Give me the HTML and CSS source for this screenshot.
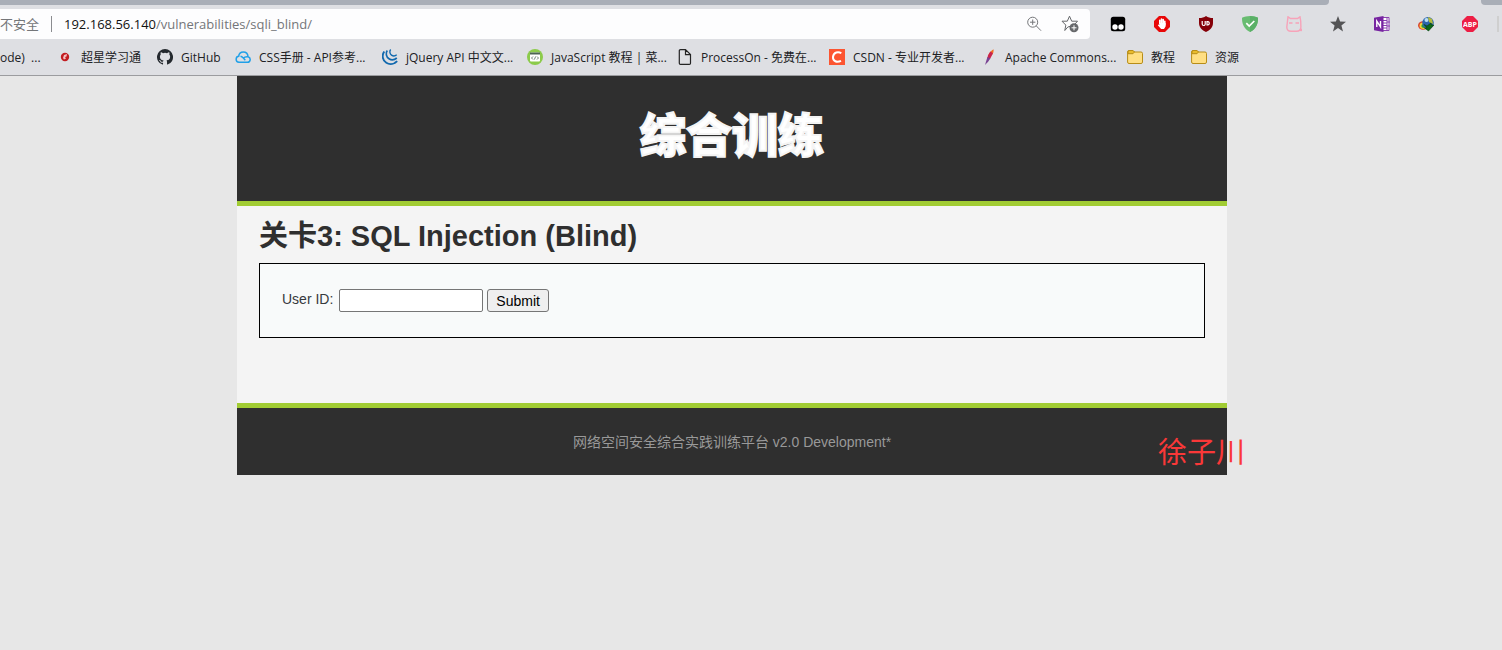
FILE: index.html
```html
<!DOCTYPE html>
<html lang="zh-CN">
<head>
<meta charset="utf-8">
<title>SQL Injection (Blind)</title>
<link rel="stylesheet" href="styles.css">
</head>
<body>
<header class="browser">
  <div class="tabs"><div class="tab-strip"></div><div class="tab-end"></div></div>
  <div class="toolbar">
    <div class="address">
      <span class="insecure">不安全</span>
      <span class="url"><b class="host">192.168.56.140</b>/vulnerabilities/sqli_blind/</span>
      <button class="icon-button" aria-label="缩放"><svg class="icon" viewBox="0 0 16 16" fill="none" stroke="#747679"><circle cx="6.7" cy="6.2" r="5"/><path d="M10.2 9.8 15 14.7M4 6.2h5.4M6.7 3.5v5.4"/></svg></button>
      <button class="icon-button" aria-label="收藏"><svg class="icon icon-large" viewBox="0 0 18 18" fill="none" stroke="#66686b"><path d="m8.5 1.2 2.2 5h5.8l-3.500 4-6.200 1.800-3 3.500 1-5.400L1 6.200h5.300z" stroke-linejoin="round"/><circle cx="13" cy="12.8" r="4.5" fill="#66686b" stroke="none"/><path stroke="#fff" d="M10.5 12.8h5M13 10.3v5"/></svg></button>
    </div>
    <nav class="extensions" aria-label="扩展">
      <button class="icon-button" aria-label="Tampermonkey"><svg class="icon" viewBox="0 0 16 16"><rect x=".8" y=".8" width="14.4" height="14.4" rx="2.5"/><circle cx="5" cy="11" r="2.7" fill="#fff"/><circle cx="11" cy="11" r="2.7" fill="#fff"/></svg></button>
      <button class="icon-button" aria-label="AdBlock"><svg class="icon" viewBox="0 0 16 16"><path fill="#e80808" d="M5 0h6l5 5v6l-5 5H5l-5-5V5z"/><path fill="none" stroke="#fff" stroke-width="1.6" stroke-linecap="round" d="M5.8 8V4.2M7.5 8V3M9.2 8V3.6M10.8 9V5.2"/><path fill="#fff" d="M5 7h6.6v3.5L10 13H7.1L3.8 9.2l.7-.8L6 9z"/></svg></button>
      <button class="icon-button" aria-label="uBlock Origin"><svg class="icon" viewBox="0 0 16 16"><path fill="#850008" d="M8 0c2 1.4 4.2 2 7 2v5c0 4.500-3 7-7 9-4-2-7-4.500-7-9V2c3 0 5-.6 7-2z"/><path fill="none" stroke="#fff" stroke-width="1.2" d="M4.200 5v3a1.500 1.500 0 0 0 3 0V5M9 5.600v3.300h1a1.700 1.700 0 0 0 0-3.300z"/></svg></button>
      <button class="icon-button" aria-label="AdGuard"><svg class="icon" viewBox="0 0 16 16"><path fill="#68bc71" d="M8 0c3 .1 5.500.7 8 1.700 0 6-1.500 10.800-8 14.300C1.500 12.500 0 7.700 0 1.700 2.500.7 5 .1 8 0z"/><path fill="#5ab067" d="M8 0c3 .1 5.500.7 8 1.700 0 6-1.500 10.800-8 14.300z"/><path fill="none" stroke="#fff" stroke-width="1.700" d="m4.300 7.200 2.900 2.900L12.300 5"/></svg></button>
      <button class="icon-button" aria-label="小猫"><svg class="icon" viewBox="0 0 16 16" fill="none" stroke="#f7a3b9" stroke-width="1.400"><path d="M1.500 5 2 .8 4.500 2.500h7L14 .8l.7 4.200.2 6c0 3-1.800 4.300-4.400 4.300H5C2.300 15.300.8 14 .8 11zM3 7h3.500M9.500 7H13"/><circle cx="14.800" cy="13.800" r=".7"/></svg></button>
      <button class="icon-button" aria-label="收藏夹"><svg class="icon" viewBox="0 0 16 16"><path fill="#545456" d="m8 0 2.100 5.500 5.900.3-4.600 3.700L13 15.400l-5-3.300-5 3.300 1.600-5.900L0 5.800l5.900-.3z"/></svg></button>
      <button class="icon-button" aria-label="OneNote"><svg class="icon" viewBox="0 0 16 16"><path fill="#fff" stroke="#8b42b1" d="M8 1.500h7v13H8z"/><path stroke="#8b42b1" d="M8 4.500h5M8 7h5M8 9.500h5M8 12h5M13 2v12M13 6h3M13 10h3"/><path fill="#7725a1" d="M0 1.800 9.500 0v16L0 14.200z"/><path fill="none" stroke="#fff" stroke-width="1.400" d="M2.800 11V5.200l3.700 5.600V5"/></svg></button>
      <button class="icon-button" aria-label="IDM"><svg class="icon" viewBox="0 0 16 16"><ellipse cx="5" cy="9.500" rx="5" ry="4.200" fill="#d9432f"/><ellipse cx="5.500" cy="9.800" rx="4" ry="3.200" fill="#f2d438"/><ellipse cx="6" cy="10" rx="2.700" ry="2" fill="#2e9c43"/><circle cx="10" cy="6.800" r="5.800" fill="#2c65ac"/><circle cx="8.500" cy="4" r="2" fill="#b8dcf5"/><path fill="#b5bc3a" d="m10 1 4 2 1 5-4-2z"/><path fill="#0b6817" stroke="#073d0e" stroke-width=".6" d="M6 8.500 9 10l4-3 .5 2H16l-5.500 6-4-3H9z"/></svg></button>
      <button class="icon-button" aria-label="Adblock Plus"><svg class="icon" viewBox="0 0 16 16"><path fill="#ed1e45" d="M5 0h6l5 5v6l-5 5H5l-5-5V5z"/><text class="abp" x="8" y="10.500" text-anchor="middle">ABP</text></svg></button>
      <span class="divider"></span>
    </nav>
  </div>
  <nav class="bookmarks" aria-label="书签">
    <a class="bookmark" href="#">ode)&nbsp; ...</a>
    <a class="bookmark" href="#"><svg class="icon" viewBox="0 0 16 16"><circle cx="8" cy="8" r="4.200" fill="#c21c20"/><path fill="#f4bfc0" d="m6 9 1-3 3-1-.5 2.500L8 8l1 1.500-2 1z"/></svg>超星学习通</a>
    <a class="bookmark" href="#"><svg class="icon" viewBox="0 0 16 16"><path fill="#24292e" d="M8 0a8 8 0 0 0-2.530 15.590c.4.070.55-.170.55-.380v-1.490c-2.010.37-2.530-.490-2.690-.940-.090-.230-.480-.940-.820-1.130-.280-.150-.680-.520-.010-.530.630-.010 1.080.58 1.230.82.72 1.210 1.870.87 2.330.66.070-.520.28-.870.51-1.070-1.780-.200-3.640-.890-3.640-3.950 0-.870.31-1.590.82-2.150-.080-.200-.360-1.020.080-2.120 0 0 .67-.210 2.200.82a7.600 7.600 0 0 1 4 0c1.530-1.040 2.200-.820 2.200-.820.44 1.100.16 1.920.080 2.120.51.56.82 1.270.82 2.150 0 3.070-1.870 3.750-3.650 3.950.29.25.54.73.54 1.480v2.200c0 .21.15.46.55.380A8 8 0 0 0 8 0z"/></svg>GitHub</a>
    <a class="bookmark" href="#"><svg class="icon" viewBox="0 0 16 16" fill="none" stroke="#20a0e8" stroke-width="1.500"><path d="M4 13.300h8.500a2.800 2.800 0 0 0 .6-5.500C12.800 5 10.900 3 8.300 3 5.900 3 4 4.600 3.700 7.200.4 7.500.1 13 4 13.300zM5.500 7.300c1.300.2 2 .9 2.800 1.700l2 2.200M8.300 9.500c.9-1.300 2.200-1.900 4.400-1.700"/></svg>CSS手册 - API参考...</a>
    <a class="bookmark" href="#"><svg class="icon" viewBox="0 0 16 16" fill="none" stroke="#1169ae"><path stroke-width="1.900" d="M2.300 2.500C-.5 6 .5 11.500 4.300 13.800c3.700 2.200 8.200 1.100 10.900-1.600"/><path stroke-width="1.700" d="M5.300 1.500C3.300 4 4.200 8 7 9.800c2.500 1.600 5.700 1 7.800-.8"/><path stroke-width="1.400" d="M8.700.6c-1.500 1.600-.9 4.300.8 5.500 1.600 1.100 3.900.8 5.200-.4"/></svg>jQuery API 中文文...</a>
    <a class="bookmark" href="#"><svg class="icon" viewBox="0 0 16 16"><circle cx="8" cy="8" r="8" fill="#8ccb4b"/><rect x="3" y="3.500" width="10" height="9" rx="1" fill="#fff"/><path d="M3 4.500h10" stroke="#4d6455" stroke-width="2"/><path fill="none" stroke="#4d6455" stroke-width=".8" d="M6 7.500 4.500 9 6 10.500m4-3L11.500 9 10 10.500M8.600 7.500l-1.200 3"/></svg>JavaScript 教程 | 菜...</a>
    <a class="bookmark" href="#"><svg class="icon" viewBox="0 0 16 16" fill="none" stroke="#242424" stroke-width="1.200"><path d="M3.500.6h5l5 5v8.600q0 1.200-1.200 1.200H3.500q-1.200 0-1.200-1.200V1.800Q2.300.6 3.500.6zM8.500.6v5h5"/></svg>ProcessOn - 免费在...</a>
    <a class="bookmark" href="#"><svg class="icon" viewBox="0 0 16 16"><path fill="#fc5531" d="M0 0h16v16H0z"/><path fill="none" stroke="#fff" stroke-width="2" d="M12.300 4.300C9.500 2.300 4.500 3 4 7.900c-.4 4.500 4 5.800 8 3.900"/></svg>CSDN - 专业开发者...</a>
    <a class="bookmark" href="#"><svg class="icon" viewBox="0 0 16 16"><path fill="#f06f23" d="M12.500.3c.4 2.200-.3 4.200-1.700 6L7 7C8 4 10 1.500 12.500.3z"/><path fill="#c9234c" d="M9.500 2.500 12 4.200 9 10l-3 1c.3-3.300 1.600-6.500 3.500-8.500z"/><path fill="#794293" d="m6.500 8 2.800 1.500-2.200 3.200L4 16l1.500-5z"/></svg>Apache Commons...</a>
    <a class="bookmark" href="#"><svg class="icon" viewBox="0 0 16 16"><path fill="#ffdf83" stroke="#b78d18" d="M.6 3Q.6 1.500 2 1.500h4L7.500 3H14q1.500 0 1.500 1.500v8.600q0 1.400-1.500 1.400H2Q.6 14.500.6 13z"/><path fill="#e9bb2c" stroke="#b78d18" d="M1 4.700V3Q1 1.500 2 1.500h4L7.500 3 6 4.700z"/></svg>教程</a>
    <a class="bookmark" href="#"><svg class="icon" viewBox="0 0 16 16"><path fill="#ffdf83" stroke="#b78d18" d="M.6 3Q.6 1.500 2 1.500h4L7.500 3H14q1.500 0 1.500 1.500v8.600q0 1.400-1.500 1.400H2Q.6 14.500.6 13z"/><path fill="#e9bb2c" stroke="#b78d18" d="M1 4.700V3Q1 1.500 2 1.500h4L7.500 3 6 4.700z"/></svg>资源</a>
  </nav>
</header>
<div class="page">
  <div class="container">
    <header class="banner"><span class="logo">综合训练</span></header>
    <main class="content">
      <h1 class="title">关卡3: SQL Injection (Blind)</h1>
      <form class="query">
        <label class="label" for="user-id">User ID:</label>
        <input class="field" id="user-id" type="text">
        <button class="submit" type="submit">Submit</button>
      </form>
    </main>
    <footer class="footer">网络空间安全综合实践训练平台 v2.0 Development*<span class="signature">徐子川</span></footer>
  </div>
</div>
</body>
</html>
```
FILE: styles.css
```css
* {
  box-sizing: border-box;
}

body {
  margin: 0;
  background: #e7e7e7;
  font-family: "Liberation Sans", Arial, "Noto Sans CJK SC", sans-serif;
  font-size: 14px;
}

.browser {
  overflow: hidden;
  background: #dedfe3;
  border-bottom: 1px solid #9b9c9f;
  font-family: "Open Sans", "Noto Sans CJK SC", sans-serif;
}

.tabs {
  display: flex;
  justify-content: space-between;
  height: 5px;
}

.tab-strip {
  flex: 1;
  margin-right: 152px;
  background: #a9aeb7;
  border-radius: 0 0 4px 0;
}

.tab-end {
  width: 21px;
  background: #a9aeb7;
  border-radius: 0 0 0 4px;
}

.toolbar {
  display: flex;
  align-items: center;
  height: 38px;
}

.address {
  flex: 1;
  display: flex;
  align-items: center;
  height: 30px;
  padding-right: 11px;
  background: #fdfdfe;
  border-radius: 0 4px 4px 0;
  font-size: 13px;
  color: #747679;
}

.insecure {
  width: 52px;
  border-right: 1px solid #8b8c90;
  line-height: 16px;
  white-space: nowrap;
}

.url {
  flex: 1;
  margin-left: 12px;
}

.host {
  font-weight: 400;
  color: #111;
}

.icon-button {
  display: flex;
  align-items: center;
  justify-content: center;
  width: 18px;
  height: 24px;
  margin: 0;
  padding: 0;
  border: 0;
  background: none;
}

.address .icon-button + .icon-button {
  margin-left: 18px;
}

.icon {
  flex: none;
  width: 16px;
  height: 16px;
}

.icon-large {
  width: 18px;
  height: 18px;
}

.extensions {
  display: flex;
  align-items: center;
  gap: 26px;
  margin-left: 19px;
}

.divider {
  width: 2px;
  height: 16px;
  margin: 0 3px 0 -8px;
  background: #cfcfcf;
}

.abp {
  font: 700 7px "Open Sans", sans-serif;
  fill: #fff;
}

.bookmarks {
  display: grid;
  grid-template-columns: 57px 100px 78px 147px 145px 150px 152px 152px 146px 64px 64px;
  align-items: center;
  height: 32px;
  padding-bottom: 4px;
  font-size: 12px;
}

.bookmark {
  display: flex;
  align-items: center;
  gap: 8px;
  color: #202124;
  text-decoration: none;
  white-space: nowrap;
}

.page {
  padding-right: 38px;
}

.container {
  max-width: 990px;
  margin: 0 auto;
  background: #f4f4f4;
}

.banner {
  display: flex;
  justify-content: center;
  height: 130px;
  padding-top: 32px;
  background: #2f2f2f;
  border-bottom: 5px solid #a1cc33;
}

.logo {
  color: #fff;
  font: 900 46px/48px "Noto Sans CJK SC", sans-serif;
  -webkit-text-stroke: 2px #f4f4f4;
}

.content {
  padding: 12px 22px 65px;
}

.title {
  margin: 0 0 9px;
  color: #2f2f2f;
  font-size: 29px;
  line-height: 36px;
}

.query {
  display: flex;
  align-items: flex-start;
  gap: 4px;
  padding: 25px 22px;
  background: #f8fafa;
  border: 1px solid #000;
  color: #36393d;
}

.label {
  padding-right: 2px;
  line-height: 20px;
}

.field {
  width: 144px;
  height: 23px;
  border: 1px solid #767676;
  border-radius: 2px;
  background: #fff;
}

.submit {
  height: 23px;
  padding: 0 8px;
  border: 1px solid #767676;
  border-radius: 3px;
  background: #efefef;
  color: #000;
  font: inherit;
}

.footer {
  position: relative;
  padding: 24px 16px 23px;
  background: #2f2f2f;
  border-top: 5px solid #a1cc33;
  color: #999;
  line-height: 20px;
  text-align: center;
}

.signature {
  position: absolute;
  right: -18px;
  bottom: 7px;
  color: #fa3838;
  font: 29px/36px "Noto Sans CJK SC", sans-serif;
}
```
